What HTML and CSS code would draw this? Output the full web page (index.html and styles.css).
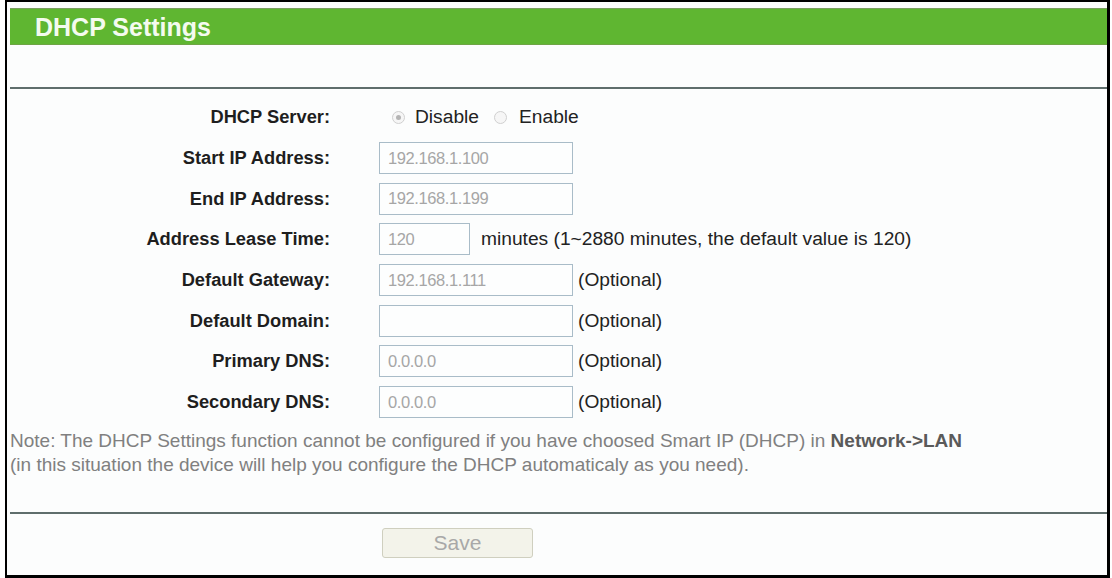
FILE: index.html
```html
<!DOCTYPE html>
<html>
<head>
<meta charset="utf-8">
<link rel="stylesheet" href="styles.css">
</head>
<body>
<div class="frame">
  <div class="titlebar"><span class="title">DHCP Settings</span></div>
  <div class="spacer"></div>
  <div class="rule"></div>
  <div class="form">
    <div class="label">DHCP Server:</div>
    <div class="field radios">
      <span class="radio checked"></span><span class="rtext">Disable</span>
      <span class="radio"></span><span class="rtext">Enable</span>
    </div>

    <div class="label">Start IP Address:</div>
    <div class="field"><span class="input">192.168.1.100</span></div>

    <div class="label">End IP Address:</div>
    <div class="field"><span class="input">192.168.1.199</span></div>

    <div class="label">Address Lease Time:</div>
    <div class="field"><span class="input short">120</span><span class="after wide">minutes (1~2880 minutes, the default value is 120)</span></div>

    <div class="label">Default Gateway:</div>
    <div class="field"><span class="input">192.168.1.111</span><span class="after">(Optional)</span></div>

    <div class="label">Default Domain:</div>
    <div class="field"><span class="input"></span><span class="after">(Optional)</span></div>

    <div class="label">Primary DNS:</div>
    <div class="field"><span class="input">0.0.0.0</span><span class="after">(Optional)</span></div>

    <div class="label">Secondary DNS:</div>
    <div class="field"><span class="input">0.0.0.0</span><span class="after">(Optional)</span></div>
  </div>
  <div class="note">
    <div>Note: The DHCP Settings function cannot be configured if you have choosed Smart IP (DHCP) in <b>Network-&gt;LAN</b></div>
    <div>(in this situation the device will help you configure the DHCP automaticaly as you need).</div>
  </div>
  <div class="rule"></div>
  <div class="actions"><span class="btn">Save</span></div>
</div>
</body>
</html>
```
FILE: styles.css
```css
html, body {
  margin: 0;
  padding: 0;
  background: #ffffff;
}
body {
  font-family: "Liberation Sans", Arial, sans-serif;
  width: 1112px;
  height: 578px;
  overflow: hidden;
}
.frame {
  margin-left: 5px;
  width: 1105px;
  height: 578px;
  box-sizing: border-box;
  border: solid #000;
  border-width: 2px 3px 3px 2px;
  background: #fcfdfd;
  padding: 6px 0 0 3px;
}
.titlebar {
  height: 37px;
  background: #5fb631;
  border-top: 1px solid #7c9e62;
  border-bottom: 1px solid #6ea445;
  box-sizing: border-box;
  display: flex;
  align-items: center;
  padding-left: 25px;
}
.title {
  color: #f4fbef;
  font-weight: bold;
  font-size: 25px;
  margin-top: 1px;
}
.spacer {
  height: 42px;
}
.rule {
  height: 2px;
  background: #5f6e6c;
}
.form {
  display: grid;
  grid-template-columns: 320px 1fr;
  column-gap: 49px;
  grid-auto-rows: 40.7px;
  padding-top: 8px;
}
.label {
  font-weight: bold;
  font-size: 18.3px;
  color: #1e1e1e;
  display: flex;
  align-items: center;
  justify-content: flex-end;
}
.field {
  display: flex;
  align-items: center;
  font-size: 19.2px;
  color: #222;
}
.radios {
  padding-left: 13px;
}
.radio {
  width: 13px;
  height: 13px;
  border-radius: 50%;
  border: 1px solid #d0d0d0;
  background: #f6f6f6;
  box-sizing: border-box;
  position: relative;
  margin-right: 10px;
}
.radio.checked::after {
  content: "";
  position: absolute;
  left: 3px;
  top: 3px;
  width: 5px;
  height: 5px;
  border-radius: 50%;
  background: #b4b4b4;
}
.rtext {
  margin-right: 15px;
}
.rtext:last-child {
  margin-left: 2px;
}
.input {
  box-sizing: border-box;
  width: 194px;
  height: 32px;
  border: 1px solid #a9bcc8;
  background: #fdfefe;
  color: #a6a6a6;
  font-size: 16.5px;
  letter-spacing: -0.4px;
  padding-left: 8px;
  display: flex;
  align-items: center;
}
.input.short {
  width: 91px;
}
.after {
  margin-left: 5px;
}
.after.wide {
  margin-left: 11px;
}
.note {
  padding-top: 6px;
  font-size: 19px;
  line-height: 24px;
  color: #808080;
  height: 83px;
}
.note b {
  color: #5a5a5a;
}
.actions {
  padding-top: 14px;
  padding-left: 372px;
}
.btn {
  display: flex;
  align-items: center;
  justify-content: center;
  width: 151px;
  height: 30px;
  box-sizing: border-box;
  border: 1px solid #cfcfbf;
  border-radius: 3px;
  background: #f3f3ea;
  color: #a8a8a8;
  font-size: 21px;
}
```
